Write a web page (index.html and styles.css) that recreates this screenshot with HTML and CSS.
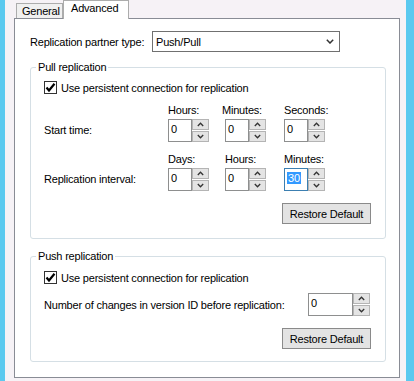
FILE: index.html
```html
<!DOCTYPE html>
<html>
<head>
<meta charset="utf-8">
<link rel="stylesheet" href="styles.css">
</head>
<body>
<div class="frame">
  <div class="tabs">
    <div class="tab">General</div>
    <div class="tab tab-active">Advanced</div>
  </div>
  <div class="panel">
    <div class="partner">
      <span class="partner-label">Replication partner type:</span>
      <div class="select">
        <span class="select-value">Push/Pull</span>
        <svg class="select-arrow" width="8" height="5" viewBox="0 0 8 5"><polyline points="0.8,0.8 4,4 7.2,0.8" fill="none" stroke="#333" stroke-width="1.5"/></svg>
      </div>
    </div>

    <fieldset class="group group-pull">
      <legend class="group-title">Pull replication</legend>
      <div class="group-body body-pull">
        <div class="check-row">
          <span class="checkbox"><svg width="11" height="11" viewBox="0 0 11 11"><polyline points="1.5,5.5 4,8.5 9.5,1.8" fill="none" stroke="#000" stroke-width="2.2"/></svg></span>
          <span class="check-text">Use persistent connection for replication</span>
        </div>
        <div class="time-grid">
          <div class="row-label">Start time:</div>
          <div class="cell"><div class="cell-label">Hours:</div>
            <div class="spin"><div class="spin-field">0</div><div class="spin-btns"><div class="spin-btn"><svg width="7" height="5" viewBox="0 0 7 5"><polyline points="0.8,4 3.5,1.2 6.2,4" fill="none" stroke="#333" stroke-width="1.3"/></svg></div><div class="spin-btn"><svg width="7" height="5" viewBox="0 0 7 5"><polyline points="0.8,1 3.5,3.8 6.2,1" fill="none" stroke="#333" stroke-width="1.3"/></svg></div></div></div>
          </div>
          <div class="cell"><div class="cell-label cell-label-shift">Minutes:</div>
            <div class="spin"><div class="spin-field">0</div><div class="spin-btns"><div class="spin-btn"><svg width="7" height="5" viewBox="0 0 7 5"><polyline points="0.8,4 3.5,1.2 6.2,4" fill="none" stroke="#333" stroke-width="1.3"/></svg></div><div class="spin-btn"><svg width="7" height="5" viewBox="0 0 7 5"><polyline points="0.8,1 3.5,3.8 6.2,1" fill="none" stroke="#333" stroke-width="1.3"/></svg></div></div></div>
          </div>
          <div class="cell"><div class="cell-label">Seconds:</div>
            <div class="spin"><div class="spin-field">0</div><div class="spin-btns"><div class="spin-btn"><svg width="7" height="5" viewBox="0 0 7 5"><polyline points="0.8,4 3.5,1.2 6.2,4" fill="none" stroke="#333" stroke-width="1.3"/></svg></div><div class="spin-btn"><svg width="7" height="5" viewBox="0 0 7 5"><polyline points="0.8,1 3.5,3.8 6.2,1" fill="none" stroke="#333" stroke-width="1.3"/></svg></div></div></div>
          </div>

          <div class="row-label">Replication interval:</div>
          <div class="cell"><div class="cell-label">Days:</div>
            <div class="spin"><div class="spin-field">0</div><div class="spin-btns"><div class="spin-btn"><svg width="7" height="5" viewBox="0 0 7 5"><polyline points="0.8,4 3.5,1.2 6.2,4" fill="none" stroke="#333" stroke-width="1.3"/></svg></div><div class="spin-btn"><svg width="7" height="5" viewBox="0 0 7 5"><polyline points="0.8,1 3.5,3.8 6.2,1" fill="none" stroke="#333" stroke-width="1.3"/></svg></div></div></div>
          </div>
          <div class="cell"><div class="cell-label">Hours:</div>
            <div class="spin"><div class="spin-field">0</div><div class="spin-btns"><div class="spin-btn"><svg width="7" height="5" viewBox="0 0 7 5"><polyline points="0.8,4 3.5,1.2 6.2,4" fill="none" stroke="#333" stroke-width="1.3"/></svg></div><div class="spin-btn"><svg width="7" height="5" viewBox="0 0 7 5"><polyline points="0.8,1 3.5,3.8 6.2,1" fill="none" stroke="#333" stroke-width="1.3"/></svg></div></div></div>
          </div>
          <div class="cell"><div class="cell-label">Minutes:</div>
            <div class="spin"><div class="spin-field spin-focus"><span class="selected">30</span></div><div class="spin-btns"><div class="spin-btn"><svg width="7" height="5" viewBox="0 0 7 5"><polyline points="0.8,4 3.5,1.2 6.2,4" fill="none" stroke="#333" stroke-width="1.3"/></svg></div><div class="spin-btn"><svg width="7" height="5" viewBox="0 0 7 5"><polyline points="0.8,1 3.5,3.8 6.2,1" fill="none" stroke="#333" stroke-width="1.3"/></svg></div></div></div>
          </div>
        </div>
        <div class="actions"><div class="btn">Restore Default</div></div>
      </div>
    </fieldset>

    <fieldset class="group group-push">
      <legend class="group-title">Push replication</legend>
      <div class="group-body body-push">
        <div class="check-row">
          <span class="checkbox"><svg width="11" height="11" viewBox="0 0 11 11"><polyline points="1.5,5.5 4,8.5 9.5,1.8" fill="none" stroke="#000" stroke-width="2.2"/></svg></span>
          <span class="check-text">Use persistent connection for replication</span>
        </div>
        <div class="changes-row">
          <div class="changes-label">Number of changes in version ID before replication:</div>
          <div class="spin"><div class="spin-field spin-field-wide">0</div><div class="spin-btns"><div class="spin-btn"><svg width="7" height="5" viewBox="0 0 7 5"><polyline points="0.8,4 3.5,1.2 6.2,4" fill="none" stroke="#333" stroke-width="1.3"/></svg></div><div class="spin-btn"><svg width="7" height="5" viewBox="0 0 7 5"><polyline points="0.8,1 3.5,3.8 6.2,1" fill="none" stroke="#333" stroke-width="1.3"/></svg></div></div></div>
        </div>
        <div class="actions"><div class="btn">Restore Default</div></div>
      </div>
    </fieldset>
  </div>
</div>
</body>
</html>
```

FILE: styles.css
```css
* { box-sizing: border-box; }

html, body {
  margin: 0;
  padding: 0;
}

body {
  width: 414px;
  height: 381px;
  overflow: hidden;
  background: #5bc9ef;
  font-family: "Liberation Sans", Arial, sans-serif;
  font-size: 11px;
  letter-spacing: -0.2px;
  color: #000;
}

.frame {
  margin: 0 8px 0 5px;
  height: 381px;
  background: #f6f2f6;
  padding: 0 6px 0 9px;
}

.tabs {
  display: flex;
  align-items: flex-end;
  height: 18px;
  padding-left: 2px;
}

.tab {
  height: 15px;
  width: 47px;
  border: 1px solid #acacac;
  border-bottom: none;
  background: #f0f0f0;
  padding-left: 5px;
  line-height: 14px;
}

.tab-active {
  position: relative;
  z-index: 1;
  width: 66px;
  height: 19px;
  margin-bottom: -1px;
  background: #fff;
  padding-left: 7px;
  line-height: 14px;
}

.panel {
  height: 360px;
  border: 1px solid #898c95;
  background: #fff;
}

.partner {
  display: flex;
  align-items: center;
  padding: 12px 0 0 15px;
}

.partner-label {
  width: 122px;
}

.select {
  width: 188px;
  height: 21px;
  border: 1px solid #707070;
  display: flex;
  align-items: center;
  justify-content: space-between;
  padding: 0 5px 0 3px;
}

.group {
  width: 356px;
  margin: 8px 0 0 15px;
  padding: 0;
  border: 1px solid #d5dfe5;
  border-radius: 3px;
  min-width: 0;
}

.group-push {
  margin-top: 10px;
}

.group-title {
  margin-left: 5px;
  padding: 0 2px;
  line-height: 14px;
}

.group-body {
  padding: 7px 14px 14px 13px;
}

.body-push {
  padding: 8px 14px 12px 13px;
}

.check-row {
  display: flex;
  align-items: center;
  height: 13px;
}

.checkbox {
  width: 13px;
  height: 13px;
  border: 1px solid #333;
  background: #fff;
  display: flex;
  align-items: center;
  justify-content: center;
  margin-right: 4px;
}

.check-text {
  line-height: 14px;
}

.time-grid {
  display: grid;
  grid-template-columns: 124px 57px 59px 41px;
  row-gap: 10px;
  margin-top: 9px;
}

.row-label {
  align-self: end;
  height: 23px;
  line-height: 23px;
}

.cell {
  display: flex;
  flex-direction: column;
}

.cell-label {
  height: 14px;
  line-height: 14px;
  margin-bottom: 2px;
}

.cell-label-shift {
  margin-left: -3px;
}

.spin {
  display: flex;
  height: 23px;
}

.spin-field {
  width: 24px;
  height: 23px;
  border: 1px solid #8e8f8f;
  background: #fff;
  padding: 2px 0 0 2px;
  line-height: 14px;
}

.spin-field-wide {
  width: 45px;
}

.spin-focus {
  border-color: #3c7fb1;
}

.selected {
  background: #3399ff;
  color: #fff;
  padding: 0 1px;
}

.spin-btns {
  width: 17px;
  display: flex;
  flex-direction: column;
  gap: 1px;
}

.spin-btn {
  flex: 1;
  border: 1px solid #b4b4b4;
  background: #e4e4e4;
  display: flex;
  align-items: center;
  justify-content: center;
}

.actions {
  display: flex;
  justify-content: flex-end;
  margin-top: 12px;
}

.btn {
  width: 89px;
  height: 21px;
  border: 1px solid #8a8a8a;
  background: #e3e3e3;
  display: flex;
  align-items: center;
  justify-content: center;
}

.changes-row {
  display: flex;
  align-items: center;
  margin-top: 9px;
}

.changes-label {
  width: 264px;
}
```
